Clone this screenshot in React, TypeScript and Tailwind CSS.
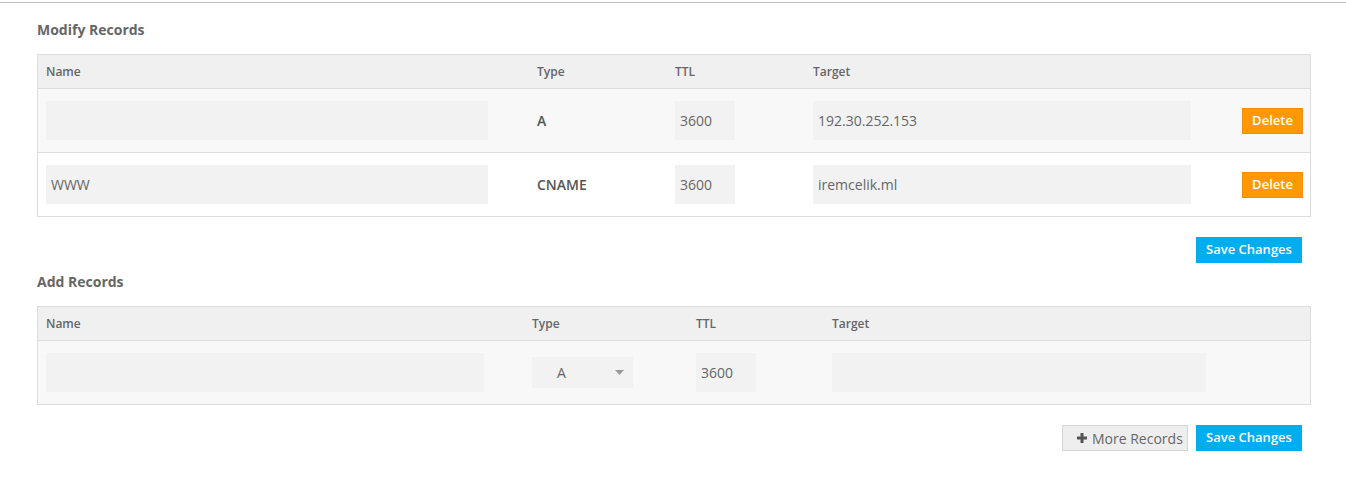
import React from "react";

const modifyRows = [
  { name: "", type: "A", ttl: "3600", target: "192.30.252.153", bg: "bg-[#f8f8f8]" },
  { name: "WWW", type: "CNAME", ttl: "3600", target: "iremcelik.ml", bg: "bg-white" },
];

function Field({ value, className }: { value: string; className: string }) {
  return (
    <div className={`h-[39px] bg-[#f2f2f2] flex items-center px-[5px] text-[14px] text-[#666] ${className}`}>
      {value}
    </div>
  );
}

function HeaderCell({ label, className }: { label: string; className: string }) {
  return <div className={`text-[12px] font-semibold text-[#666] ${className}`}>{label}</div>;
}

function SaveButton() {
  return (
    <button className="h-[26px] w-[106px] bg-[#00aeef] text-white text-[13px] font-semibold">
      Save Changes
    </button>
  );
}

export default function App() {
  return (
    <div className="min-h-[479px] bg-white border-t border-[#bbb] mt-[2px] pl-[37px] pr-[35px] font-['Open_Sans',sans-serif]">
      <h2 className="pt-[16px] h-[51px] text-[14px] font-bold text-[#666]">Modify Records</h2>

      <div className="border border-[#ddd]">
        <div className="h-[34px] flex items-center pl-[8px] bg-[#f0f0f0] border-b border-[#ddd]">
          <HeaderCell label="Name" className="w-[491px]" />
          <HeaderCell label="Type" className="w-[138px]" />
          <HeaderCell label="TTL" className="w-[138px]" />
          <HeaderCell label="Target" className="flex-1" />
        </div>
        {modifyRows.map((row, i) => (
          <div
            key={i}
            className={`h-[64px] last:h-[63px] flex items-center pl-[8px] pr-[7px] ${row.bg} ${i === 0 ? "border-b border-[#ddd]" : ""}`}
          >
            <div className="w-[491px]">
              <Field value={row.name} className="w-[442px]" />
            </div>
            <div className="w-[138px] text-[14px] font-semibold text-[#555]">{row.type}</div>
            <div className="w-[138px]">
              <Field value={row.ttl} className="w-[60px]" />
            </div>
            <Field value={row.target} className="w-[378px]" />
            <button className="ml-auto h-[26px] w-[61px] bg-[#ff9900] border border-[#f0900a] text-white text-[13px] font-semibold">
              Delete
            </button>
          </div>
        ))}
      </div>

      <div className="flex justify-end pr-[9px] pt-[20px]">
        <SaveButton />
      </div>

      <h2 className="pt-[8px] h-[43px] text-[14px] font-bold text-[#666]">Add Records</h2>

      <div className="border border-[#ddd]">
        <div className="h-[34px] flex items-center pl-[8px] bg-[#f0f0f0] border-b border-[#ddd]">
          <HeaderCell label="Name" className="w-[486px]" />
          <HeaderCell label="Type" className="w-[164px]" />
          <HeaderCell label="TTL" className="w-[136px]" />
          <HeaderCell label="Target" className="flex-1" />
        </div>
        <div className="h-[63px] flex items-center pl-[8px] bg-[#f8f8f8]">
          <div className="w-[486px]">
            <Field value="" className="w-[438px]" />
          </div>
          <div className="w-[164px]">
            <div className="h-[31px] w-[101px] bg-[#f2f2f2] flex items-center pl-[25px] pr-[9px] text-[14px] text-[#666]">
              <span>A</span>
              <svg className="ml-auto" width="9" height="5" viewBox="0 0 9 5">
                <path d="M0 0h9L4.5 5z" fill="#999" />
              </svg>
            </div>
          </div>
          <div className="w-[136px]">
            <Field value="3600" className="w-[60px]" />
          </div>
          <Field value="" className="w-[374px]" />
        </div>
      </div>

      <div className="flex justify-end gap-[8px] pr-[9px] pt-[20px]">
        <button className="h-[26px] w-[126px] bg-[#eeeeee] border border-[#d6d6d6] text-[14px] text-[#666] flex items-center pl-[14px] gap-[5px]">
          <svg width="10" height="10" viewBox="0 0 10 10">
            <path d="M3.5 0h3v3.5H10v3H6.5V10h-3V6.5H0v-3h3.5z" fill="#555" />
          </svg>
          More Records
        </button>
        <SaveButton />
      </div>
    </div>
  );
}
